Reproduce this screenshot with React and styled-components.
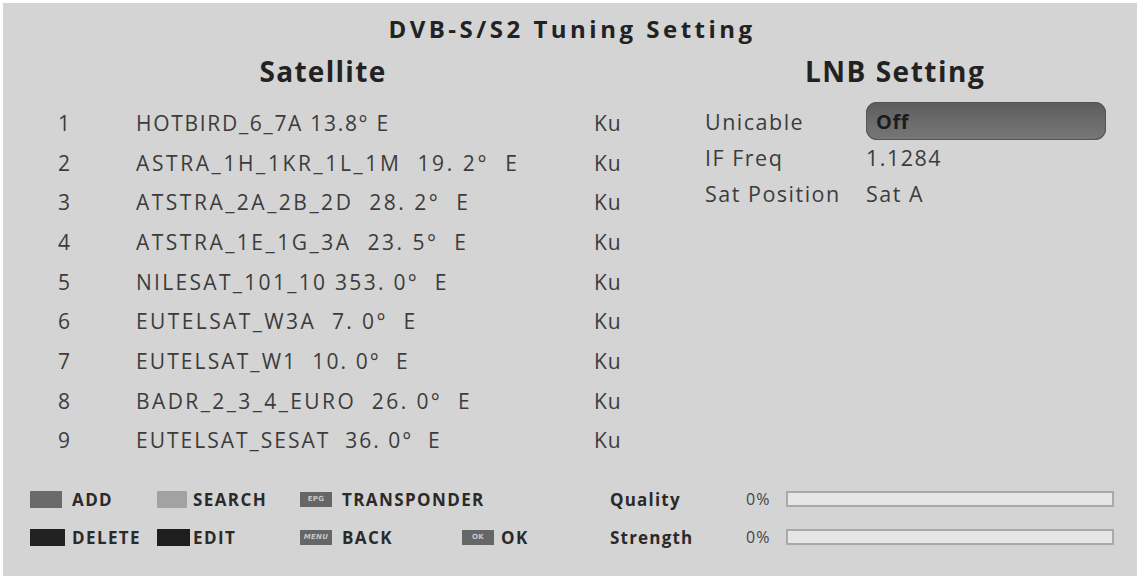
import React from "react";
import styled, { createGlobalStyle } from "styled-components";

const Global = createGlobalStyle`
  html, body { margin: 0; padding: 0; background: #ffffff; }
  body { font-family: "Open Sans", "Noto Sans", sans-serif; }
`;

const Screen = styled.div`
  box-sizing: border-box;
  margin-top: 3px;
  margin-left: 3px;
  width: 1134px;
  height: 573px;
  background: #d4d4d4;
  color: #3a3a3a;
  display: flex;
  flex-direction: column;
  overflow: hidden;
`;

const Title = styled.h1`
  margin: 0;
  padding-top: 10px;
  height: 32px;
  font-size: 24px;
  line-height: 32px;
  font-weight: 700;
  letter-spacing: 3.5px;
  text-align: center;
  color: #222;
  padding-left: 4px;
`;

const Main = styled.div`
  display: grid;
  grid-template-columns: 640px 1fr;
  height: 435px;
`;

const Heading = styled.h2`
  margin: 0;
  padding-top: 6px;
  height: 40px;
  line-height: 40px;
  font-size: 28px;
  font-weight: 700;
  letter-spacing: ${(p) => p.$ls || 1.3}px;
  color: #222;
  text-align: ${(p) => p.$align || "center"};
  padding-left: ${(p) => p.$pl || 0}px;
`;

const List = styled.div`
  display: flex;
  flex-direction: column;
  padding-top: 12px;
`;

const SatRow = styled.div`
  display: grid;
  grid-template-columns: 78px 458px auto;
  padding-left: 55px;
  height: 39.7px;
  align-items: center;
  font-size: 21px;
  color: #3c3c3c;
`;

const Num = styled.span`
  letter-spacing: 0;
`;

const SatName = styled.span`
  letter-spacing: ${(p) => p.$ls}px;
  white-space: pre;
`;

const Band = styled.span`
  letter-spacing: 1px;
`;

const Side = styled.div`
  display: flex;
  flex-direction: column;
  padding-left: 62px;
`;

const LnbList = styled.div`
  display: flex;
  flex-direction: column;
  padding-top: 10px;
`;

const LnbRow = styled.div`
  display: grid;
  grid-template-columns: 161px 240px;
  align-items: center;
  height: ${(p) => p.$h}px;
  font-size: 21.5px;
  letter-spacing: 1.5px;
  color: #3c3c3c;
`;

const OffBox = styled.div`
  height: 38px;
  border-radius: 11px;
  background: linear-gradient(#5c5c5c, #6e6e6e 60%, #767676);
  box-shadow: inset 0 0 0 1px #555;
  display: flex;
  align-items: center;
  padding-left: 10px;
  font-weight: 700;
  letter-spacing: 0.5px;
  color: #1c1c1c;
  font-size: 20px;
`;

const Footer = styled.div`
  display: grid;
  grid-template-columns: 567px 1fr;
`;

const Legend = styled.div`
  display: grid;
  grid-template-columns: 127px 143px 162px auto;
  grid-template-rows: 38px 38px;
  padding-left: 27px;
  align-items: center;
`;

const Key = styled.div`
  display: flex;
  align-items: center;
  gap: ${(p) => p.$gap || 10}px;
  font-size: 17px;
  font-weight: 700;
  letter-spacing: 1.4px;
  color: #2a2a2a;
  white-space: nowrap;
  grid-column: ${(p) => p.$span || "auto"};
`;

const Swatch = styled.span`
  display: inline-block;
  width: ${(p) => p.$w || 32}px;
  height: 17px;
  background: ${(p) => p.$c};
`;

const Tag = styled.span`
  display: inline-flex;
  align-items: center;
  justify-content: center;
  width: 32px;
  height: 15px;
  background: #666;
  color: #c8c8c8;
  font-size: 7px;
  font-weight: 700;
  font-style: ${(p) => (p.$italic ? "italic" : "normal")};
  letter-spacing: 0.3px;
  font-family: "DejaVu Sans", sans-serif;
`;

const Signal = styled.div`
  display: grid;
  grid-template-columns: 136px 40px 328px;
  grid-template-rows: 38px 38px;
  align-items: center;
  padding-left: 40px;
`;

const SigLabel = styled.span`
  font-size: 17px;
  font-weight: 700;
  letter-spacing: 1.2px;
  color: #2a2a2a;
`;

const Pct = styled.span`
  font-size: 16px;
  letter-spacing: 1px;
  color: #444;
`;

const Bar = styled.div`
  box-sizing: border-box;
  height: 16px;
  border: 2px solid #a9a9a9;
  background: #e6e6e6;
`;

const sats = [
  { name: "HOTBIRD_6_7A 13.8° E", ls: 1.7 },
  { name: "ASTRA_1H_1KR_1L_1M  19. 2°  E", ls: 2.6 },
  { name: "ATSTRA_2A_2B_2D  28. 2°  E", ls: 2.5 },
  { name: "ATSTRA_1E_1G_3A  23. 5°  E", ls: 2.5 },
  { name: "NILESAT_101_10 353. 0°  E", ls: 2.3 },
  { name: "EUTELSAT_W3A  7. 0°  E", ls: 2.4 },
  { name: "EUTELSAT_W1  10. 0°  E", ls: 2.1 },
  { name: "BADR_2_3_4_EURO  26. 0°  E", ls: 2.4 },
  { name: "EUTELSAT_SESAT  36. 0°  E", ls: 2.0 },
];

export default function App() {
  return (
    <>
      <Global />
      <Screen>
        <Title>DVB-S/S2 Tuning Setting</Title>
        <Main>
          <div>
            <Heading>Satellite</Heading>
            <List>
              {sats.map((s, i) => (
                <SatRow key={i}>
                  <Num>{i + 1}</Num>
                  <SatName $ls={s.ls}>{s.name}</SatName>
                  <Band>Ku</Band>
                </SatRow>
              ))}
            </List>
          </div>
          <Side>
            <Heading $align="left" $pl={100} $ls={1.5}>LNB Setting</Heading>
            <LnbList>
              <LnbRow $h={40}>
                <span>Unicable</span>
                <OffBox>Off</OffBox>
              </LnbRow>
              <LnbRow $h={32}>
                <span>IF Freq</span>
                <span>1.1284</span>
              </LnbRow>
              <LnbRow $h={40}>
                <span>Sat Position</span>
                <span>Sat A</span>
              </LnbRow>
            </LnbList>
          </Side>
        </Main>
        <Footer>
          <Legend>
            <Key>
              <Swatch $c="#6a6a6a" />
              ADD
            </Key>
            <Key $gap={6}>
              <Swatch $c="#a2a2a2" $w={30} />
              SEARCH
            </Key>
            <Key $span="3 / span 2" $gap={10}>
              <Tag>EPG</Tag>
              TRANSPONDER
            </Key>
            <Key $gap={7}>
              <Swatch $c="#222" $w={35} />
              DELETE
            </Key>
            <Key $gap={3}>
              <Swatch $c="#1e1e1e" $w={33} />
              EDIT
            </Key>
            <Key $gap={10}>
              <Tag $italic>MENU</Tag>
              BACK
            </Key>
            <Key $gap={7}>
              <Tag>OK</Tag>
              OK
            </Key>
          </Legend>
          <Signal>
            <SigLabel>Quality</SigLabel>
            <Pct>0%</Pct>
            <Bar />
            <SigLabel>Strength</SigLabel>
            <Pct>0%</Pct>
            <Bar />
          </Signal>
        </Footer>
      </Screen>
    </>
  );
}
